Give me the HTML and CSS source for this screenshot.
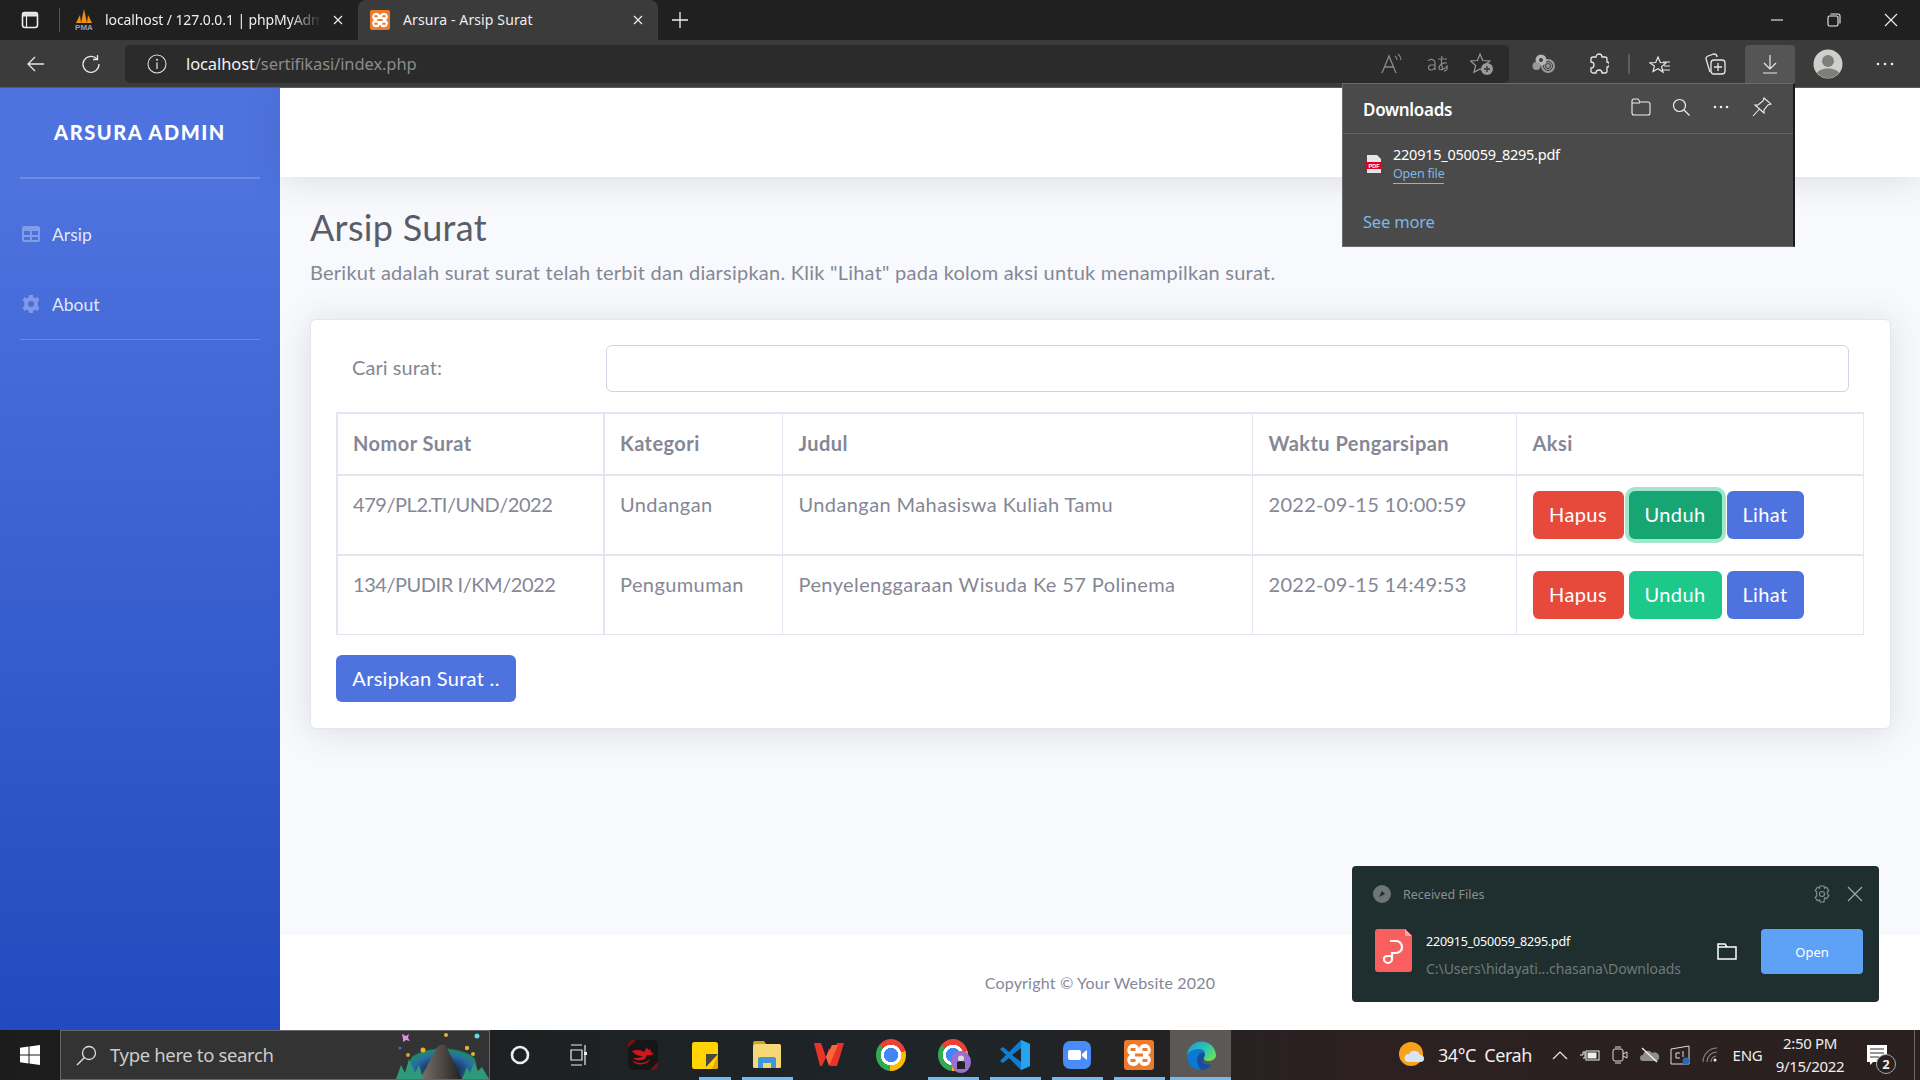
FILE: index.html
```html
<!DOCTYPE html>
<html lang="id">
<head>
<meta charset="utf-8">
<title>Arsura - Arsip Surat</title>
<link rel="stylesheet" href="styles.css">
</head>
<body>
<div class="tabbar">
  <div class="tab-toggle">
    <svg class="ic" width="18" height="18" viewBox="0 0 18 18"><rect x="1.5" y="1.5" width="15" height="15" rx="2.5" fill="none" stroke="#eee" stroke-width="1.6"/><path d="M2 2h14v3H2zM5.5 5v11" fill="#ddd" stroke="#eee" stroke-width="1.2"/></svg>
  </div>
  <div class="tab-sep"></div>
  <div class="tab">
    <svg class="fav" width="20" height="22" viewBox="0 0 20 22"><path d="M2 14 6 6l1 8zM7 14l3-14 3 14zM13 14l1-8 4 8z" fill="#f29111"/><text x="10" y="21" class="pma">PMA</text></svg>
    <span class="tab-title fade">localhost / 127.0.0.1 | phpMyAdmin</span>
    <svg class="tab-x" width="12" height="12" viewBox="0 0 12 12"><path d="M2 2l8 8M10 2l-8 8" stroke="#eee" stroke-width="1.2"/></svg>
  </div>
  <div class="tab active">
    <svg class="fav" width="20" height="20" viewBox="0 0 30 30"><rect width="30" height="30" rx="3" fill="#ee7a2c"/><path d="M9 4a6 6 0 0 1 6 4 6 6 0 0 1 6-4 6 6 0 0 1 3 11 6 6 0 0 1-3 11 6 6 0 0 1-6-4 6 6 0 0 1-6 4 6 6 0 0 1-3-11A6 6 0 0 1 9 4z" fill="#fff"/><path d="M6.500 8h5v3h-5zM18.500 8h5v3h-5zM6.500 19h5v3h-5zM18.500 19h5v3h-5zM11 13.500h8v3h-8z" fill="#ee7a2c"/></svg>
    <span class="tab-title">Arsura - Arsip Surat</span>
    <svg class="tab-x" width="12" height="12" viewBox="0 0 12 12"><path d="M2 2l8 8M10 2l-8 8" stroke="#eee" stroke-width="1.2"/></svg>
  </div>
  <svg class="plus" width="18" height="18" viewBox="0 0 18 18"><path d="M9 1v16M1 9h16" stroke="#eee" stroke-width="1.3"/></svg>
  <div class="win">
    <svg width="14" height="14" viewBox="0 0 14 14"><path d="M1 7h12" stroke="#eee" stroke-width="1.1"/></svg>
    <svg width="14" height="14" viewBox="0 0 14 14"><rect x="1" y="3" width="10" height="10" rx="1.5" fill="none" stroke="#eee" stroke-width="1.1"/><path d="M3.5 1h7.5a2 2 0 0 1 2 2v7.5" fill="none" stroke="#eee" stroke-width="1.1"/></svg>
    <svg width="14" height="14" viewBox="0 0 14 14"><path d="M1 1l12 12M13 1L1 13" stroke="#eee" stroke-width="1.1"/></svg>
  </div>
</div>

<div class="toolbar">
  <div class="tool-left">
    <svg width="20" height="20" viewBox="0 0 20 20"><path d="M18 10H2M9 3l-7 7 7 7" fill="none" stroke="#e8e8e8" stroke-width="1.3"/></svg>
  </div>
  <div class="tool-left">
    <svg width="20" height="20" viewBox="0 0 20 20"><path d="M16 5a8 8 0 1 0 2 5" fill="none" stroke="#e8e8e8" stroke-width="1.3"/><path d="M16.5 1v4.5H12" fill="none" stroke="#e8e8e8" stroke-width="1.3"/></svg>
  </div>
  <div class="address">
    <svg class="info" width="20" height="20" viewBox="0 0 20 20"><circle cx="10" cy="10" r="9" fill="none" stroke="#ddd" stroke-width="1.1"/><path d="M10 8.5V15" stroke="#ddd" stroke-width="1.3"/><circle cx="10" cy="5.8" r="1" fill="#ddd"/></svg>
    <span class="url"><span class="url-host">localhost</span>/sertifikasi/index.php</span>
    <div class="addr-tools">
      <span class="addr-tool"><svg width="24" height="22" viewBox="0 0 24 22"><path d="M2 20 9 3l7 17M4.5 14h9" fill="none" stroke="#8a8a8a" stroke-width="1.3"/><path d="M15 3a5 5 0 0 1 2 4M18 1a8 8 0 0 1 3 6" fill="none" stroke="#8a8a8a" stroke-width="1.1"/></svg></span>
      <span class="addr-tool"><svg width="24" height="20" viewBox="0 0 24 20"><path d="M3 7a4 4 0 0 1 7 1v8M10 11H6a2.500 2.500 0 0 0 0 5c2 0 4-2 4-3M13 5h9M17 2c-1 5-1 9 1 14M22 9c-4-1-8 2-8 5 0 3 5 2 8-2 1 3-1 5-3 5" fill="none" stroke="#8a8a8a" stroke-width="1.2"/></svg></span>
      <span class="addr-tool"><svg width="24" height="24" viewBox="0 0 24 24"><path d="M10 2l2.700 6.500 7 .5-5.400 4.500 1.700 6.800L10 17l-6 3.300 1.700-6.800L.5 9l7-.5z" fill="none" stroke="#999" stroke-width="1.2"/><circle cx="17" cy="17" r="6" fill="#9a9a9a"/><path d="M17 14v6M14 17h6" stroke="#333" stroke-width="1.300"/></svg></span>
    </div>
  </div>
  <div class="tools">
    <span class="tool"><svg width="24" height="22" viewBox="0 0 24 22"><circle cx="16" cy="13" r="7" fill="#9a9a9a"/><circle cx="16" cy="13" r="4.500" fill="none" stroke="#3b3b3b" stroke-width="1"/><circle cx="16" cy="13" r="2.500" fill="none" stroke="#3b3b3b" stroke-width="1"/><circle cx="9" cy="7" r="5.500" fill="#b5b5b5"/><circle cx="4.500" cy="13" r="4" fill="#999"/><circle cx="9" cy="7" r="2" fill="#3b3b3b"/></svg></span>
    <span class="tool"><svg width="20" height="22" viewBox="0 0 20 22"><path d="M7 4a3 3 0 0 1 6 0h3a2 2 0 0 1 2 2v3a2.500 2.500 0 0 1 0 5v4a2 2 0 0 1-2 2h-3a3 3 0 0 0-6 0H4a2 2 0 0 1-2-2v-3a3 3 0 0 0 0-6V6a2 2 0 0 1 2-2z" fill="none" stroke="#e8e8e8" stroke-width="1.300"/></svg></span>
    <span class="tool-sep"></span>
    <span class="tool"><svg width="22" height="22" viewBox="0 0 22 22"><path d="M9 2l2.300 5.500 5.700.4-4.400 3.700 1.400 5.500L9 13.700l-5 2.900 1.400-5.500L1 7.900l5.700-.4z" fill="none" stroke="#e8e8e8" stroke-width="1.200" transform="translate(0 2)"/><path d="M14 9h7M15 13h6M13 17h8" stroke="#e8e8e8" stroke-width="1.200"/></svg></span>
    <span class="tool"><svg width="22" height="24" viewBox="0 0 22 24"><path d="M6 20 2 7a3 3 0 0 1 2-3l6-2c2 0 3 1 3 3" fill="none" stroke="#e8e8e8" stroke-width="1.300"/><rect x="7" y="8" width="14" height="14" rx="3" fill="none" stroke="#e8e8e8" stroke-width="1.300"/><path d="M14 11v8M10 15h8" stroke="#e8e8e8" stroke-width="1.300"/></svg></span>
    <span class="tool current"><span class="tool-hl"><svg width="18" height="22" viewBox="0 0 18 22"><path d="M9 2v14M3 10l6 6 6-6M2 20h14" fill="none" stroke="#e8e8e8" stroke-width="1.200"/></svg></span></span>
    <span class="tool avatar"><svg width="30" height="30" viewBox="0 0 30 30"><circle cx="15" cy="15" r="14.500" fill="#cfcfcb"/><circle cx="15" cy="12" r="6" fill="#7e7e7a"/><path d="M4 24c3-6 19-6 22 0a14.500 14.500 0 0 1-22 0z" fill="#7e7e7a"/></svg></span>
    <span class="tool more"><svg width="18" height="4" viewBox="0 0 18 4"><circle cx="2" cy="2" r="1.300" fill="#eee"/><circle cx="9" cy="2" r="1.300" fill="#eee"/><circle cx="16" cy="2" r="1.300" fill="#eee"/></svg></span>
  </div>
</div>

<div class="page">
  <aside class="sidebar">
    <div class="brand">ARSURA ADMIN</div>
    <div class="side-rule"></div>
    <nav class="side-nav">
      <a class="side-link"><svg class="side-ic" width="18" height="16" viewBox="0 0 18 16"><path d="M2 0h14a2 2 0 0 1 2 2v12a2 2 0 0 1-2 2H2a2 2 0 0 1-2-2V2a2 2 0 0 1 2-2zm0 5v4h6V5zm8 0v4h6V5zm-8 6v3h6v-3zm8 0v3h6v-3z" fill-rule="evenodd"/></svg>Arsip</a>
      <a class="side-link"><svg class="side-ic" width="18" height="18" viewBox="0 0 18 18"><path d="M7 0h4l.5 2.500 1.800.8L15.500 2l2 3.300-1.800 1.800v3.800l1.800 1.800-2 3.300-2.200-1.300-1.800.8L11 18H7l-.5-2.500-1.800-.8L2.500 16l-2-3.300 1.800-1.800V7.100L.5 5.300l2-3.300 2.200 1.300 1.800-.8zM9 6a3 3 0 1 0 0 6 3 3 0 0 0 0-6z" fill-rule="evenodd"/></svg>About</a>
    </nav>
    <div class="side-rule thin"></div>
  </aside>

  <div class="content">
    <header class="topbar"></header>
    <main class="main">
      <h1 class="title">Arsip Surat</h1>
      <p class="lead">Berikut adalah surat surat telah terbit dan diarsipkan. Klik "Lihat" pada kolom aksi untuk menampilkan surat.</p>
      <section class="card">
        <div class="search-row">
          <label class="search-label" for="cari">Cari surat:</label>
          <input class="search-input" id="cari" type="text">
        </div>
        <table class="data">
          <colgroup><col class="c1"><col class="c2"><col class="c3"><col class="c4"><col class="c5"></colgroup>
          <thead>
            <tr><th>Nomor Surat</th><th>Kategori</th><th>Judul</th><th>Waktu Pengarsipan</th><th>Aksi</th></tr>
          </thead>
          <tbody>
            <tr class="r1">
              <td class="num">479/PL2.TI/UND/2022</td><td>Undangan</td><td>Undangan Mahasiswa Kuliah Tamu</td><td class="time">2022-09-15 10:00:59</td>
              <td class="acts"><div class="btns"><a class="btn hapus">Hapus</a><a class="btn unduh focus">Unduh</a><a class="btn lihat">Lihat</a></div></td>
            </tr>
            <tr class="r2">
              <td class="num">134/PUDIR I/KM/2022</td><td>Pengumuman</td><td>Penyelenggaraan Wisuda Ke 57 Polinema</td><td class="time">2022-09-15 14:49:53</td>
              <td class="acts"><div class="btns"><a class="btn hapus">Hapus</a><a class="btn unduh">Unduh</a><a class="btn lihat">Lihat</a></div></td>
            </tr>
          </tbody>
        </table>
        <a class="btn archive">Arsipkan Surat ..</a>
      </section>
    </main>
    <footer class="footer">Copyright © Your Website 2020</footer>
  </div>
</div>

<div class="taskbar">
  <div class="start"><svg width="20" height="20" viewBox="0 0 20 20"><path d="M0 2.800 8.500 1.600v7.900H0zM9.500 1.500 20 0v9.500H9.500zM0 10.500h8.500v7.900L0 17.200zM9.500 10.500H20V20L9.500 18.500z" fill="#fff"/></svg></div>
  <div class="searchbox">
    <svg class="s-ic" width="21" height="21" viewBox="0 0 21 21"><circle cx="13" cy="8" r="6.500" fill="none" stroke="#ddd" stroke-width="1.300"/><path d="M8.500 12.500 1 20" stroke="#ddd" stroke-width="1.400"/></svg>
    <span class="s-text">Type here to search</span>
    <svg class="s-art" width="93" height="49" viewBox="0 0 93 49"><defs><radialGradient id="halo" cx=".5" cy=".8" r=".6"><stop offset=".3" stop-color="#162a44"/><stop offset=".7" stop-color="#2a6aa8"/><stop offset=".92" stop-color="#1f8a6a"/><stop offset="1" stop-color="#333"/></radialGradient><linearGradient id="rock" x1="0" x2="1"><stop offset="0" stop-color="#7c7268"/><stop offset="1" stop-color="#222"/></linearGradient></defs><path d="M12 49C10 20 30 10 47 10s37 10 34 39z" fill="url(#halo)"/><path d="M24 49l18-33c3-2 6-2 8 0l16 33z" fill="url(#rock)"/><path d="M0 49l5-14 4 8 4-14 6 14 4-8 4 14zM66 49l5-12 3 6 4-10 4 8 4-4 7 12z" fill="#2f9a7a"/><path d="M6 4l4 2 3-2-1 4 2 3-4-1-3 2v-3z" fill="#e58be8"/><circle cx="50" cy="5" r="2" fill="#e0b23a"/><circle cx="81" cy="6" r="2.500" fill="#5fd8e8"/><circle cx="27" cy="20" r="2.500" fill="#f0b020"/><circle cx="71" cy="18" r="2.200" fill="#e0b23a"/><circle cx="12" cy="25" r="2" fill="#d0a828"/><circle cx="77" cy="24" r="2" fill="#e0b23a"/><circle cx="4" cy="18" r="1.500" fill="#3a6ac8"/></svg>
  </div>
  <span class="tb-sys"><svg width="20" height="20" viewBox="0 0 20 20"><circle cx="10" cy="10" r="8" fill="none" stroke="#eee" stroke-width="2.600"/></svg></span>
  <span class="tb-sys"><svg width="20" height="22" viewBox="0 0 20 22"><path d="M1 1h11M1 21h11M1 6h11v10H1z M15 1v20" fill="none" stroke="#eee" stroke-width="1.200"/><rect x="14" y="8" width="3" height="3" fill="#eee"/></svg></span>
  <span class="tb-app"><svg width="30" height="30" viewBox="0 0 30 30"><rect width="30" height="30" rx="5" fill="#161616"/><path d="M0 5a5 5 0 0 1 5-5h3L0 8zM30 25a5 5 0 0 1-5 5h-3l8-8z" fill="#7a1015"/><path d="M4 11c6-2 9-1 12 1l3-5 1 3 2-1 1 3 3 2-3 1-4 0-2 4c-4 2-9 2-12-1 4 0 8 0 10-2-5 0-9-2-11-5zM4 20c5 4 13 4 18-1-2 6-14 8-18 1z" fill="#d0161d"/></svg></span>
  <span class="tb-app open part"><svg width="26" height="27" viewBox="0 0 26 27"><rect width="26" height="27" rx="2.500" fill="#ffd400"/><path d="M26 12v13a2 2 0 0 1-2 2H20z" fill="#e6a800"/><path d="M14 12h12L14 25z" fill="#4a4742"/></svg></span>
  <span class="tb-app open"><svg width="28" height="28" viewBox="0 0 28 28"><path d="M0 2a2 2 0 0 1 2-2h9l2 3h-13z" fill="#d9a01c"/><rect y="3" width="28" height="24" rx="1.500" fill="#f8d775"/><path d="M5 27v-9a2 2 0 0 1 2-2h14a2 2 0 0 1 2 2v9h-5v-5h-8v5z" fill="#3f97d9"/></svg></span>
  <span class="tb-app"><svg width="30" height="28" viewBox="0 0 30 28"><path d="M0 2h7l5 14 3-9 3 9 5-14h7l-7 23h-7l-4-9-4 9H6z" fill="#e8332a"/><path d="M12 16 18 4h6l-9 21z" fill="#f7693a"/></svg></span>
  <span class="tb-app"><span class="chrome"></span></span>
  <span class="tb-app open"><span class="chrome"></span><span class="badge-dot"><svg width="12" height="14" viewBox="0 0 12 14"><circle cx="6" cy="3.500" r="3" fill="#ddd"/><path d="M2 14V8a4 2 0 0 1 8 0v6z" fill="#222"/></svg></span></span>
  <span class="tb-app open"><svg width="30" height="30" viewBox="0 0 30 30"><path d="M21 0l9 4v22l-9 4L9 18l-6 5-3-2 6-6-6-6 3-2 6 5z" fill="#0e7fd0"/><path d="M21 0l9 4v22l-9 4zM21 8l-9 7 9 7z" fill="#24a4ee"/><path d="M21 8v14l-9-7z" fill="#202528"/></svg></span>
  <span class="tb-app open"><svg width="28" height="28" viewBox="0 0 28 28"><rect width="28" height="28" rx="7" fill="#4a8cf7"/><rect x="5" y="9" width="13" height="10" rx="2" fill="#fff"/><path d="M19 13l5-4v10l-5-4z" fill="#fff"/></svg></span>
  <span class="tb-app open"><svg width="30" height="30" viewBox="0 0 30 30"><rect width="30" height="30" rx="3" fill="#ee7a2c"/><path d="M9 4a6 6 0 0 1 6 4 6 6 0 0 1 6-4 6 6 0 0 1 3 11 6 6 0 0 1-3 11 6 6 0 0 1-6-4 6 6 0 0 1-6 4 6 6 0 0 1-3-11A6 6 0 0 1 9 4z" fill="#fff"/><path d="M6.500 8h5v3h-5zM18.500 8h5v3h-5zM6.500 19h5v3h-5zM18.500 19h5v3h-5zM11 13.500h8v3h-8z" fill="#ee7a2c"/></svg></span>
  <span class="tb-app open now"><svg width="30" height="30" viewBox="0 0 30 30"><defs><linearGradient id="edgeA" x1="0" y1="0" x2="1" y2=".7"><stop offset="0" stop-color="#1f8fd8"/><stop offset=".6" stop-color="#2fc6b0"/><stop offset="1" stop-color="#6ade5a"/></linearGradient></defs><path d="M1 17a14.500 14.500 0 0 1 29-2c0 4-4 6-8 6-3 0-5-2-4-4 1-3 1-6-4-6-6 0-12 2-13 6z" fill="url(#edgeA)"/><path d="M1 16c1-5 7-7 12-7 6 0 7 4 5 8-3 7 3 9 8 7-3 4-7 6-11 6C7 30 1 24 1 16z" fill="#0c78cf"/><path d="M11 20c0-4 3-8 7-7 1 1 1 3 0 4-3 7 3 9 8 7-3 4-7 6-11 6 1 0-4-3-4-10z" fill="#174f9e"/></svg></span>
  <div class="tray">
    <svg class="weather" width="27" height="26" viewBox="0 0 27 26"><circle cx="12" cy="12" r="12" fill="#f6a21b"/><path d="M9 20a4 4 0 0 1 1-8 6 6 0 0 1 11 1 3.500 3.500 0 0 1 1 7z" fill="#d8e4f2"/></svg>
    <span class="w-text">34°C&nbsp; Cerah</span>
    <span class="tray-ic first"><svg width="16" height="9" viewBox="0 0 16 9"><path d="M1 8l7-7 7 7" fill="none" stroke="#eee" stroke-width="1.200"/></svg></span>
    <span class="tray-ic"><svg width="20" height="12" viewBox="0 0 20 12"><path d="M0 6h3V3h2v6H3" fill="none" stroke="#eee"/><rect x="6" y="2" width="13" height="9" fill="none" stroke="#eee"/><rect x="7.500" y="3.500" width="9" height="6" fill="#eee"/></svg></span>
    <span class="tray-ic"><svg width="16" height="18" viewBox="0 0 16 18"><rect x="1" y="3" width="10" height="12" rx="2" fill="none" stroke="#ddd"/><path d="M11 8l4-2v6l-4-2M3 1h6M3 17h6" fill="none" stroke="#ddd"/></svg></span>
    <span class="tray-ic"><svg width="20" height="16" viewBox="0 0 20 16"><path d="M3 14a3 3 0 0 1 0-6 5 5 0 0 1 9-2 4 4 0 0 1 5 8z" fill="#8e8e8e"/><path d="M2 1l15 14" stroke="#eee" stroke-width="1.400"/></svg></span>
    <span class="tray-ic"><svg width="20" height="20" viewBox="0 0 20 20"><path d="M1 4 19 1v18H1z" fill="none" stroke="#ddd"/><path d="M6 8h4M6 8v5h4M13 6v6" fill="none" stroke="#ddd"/><circle cx="16" cy="16" r="3.500" fill="#2b6ab4"/></svg></span>
    <span class="tray-ic"><svg width="16" height="16" viewBox="0 0 16 16"><path d="M1 15A14 14 0 0 1 15 1M5 15A10 10 0 0 1 15 5M9 15a6 6 0 0 1 5-6" fill="none" stroke="#888" stroke-width="1.100"/><circle cx="13" cy="13" r="1.500" fill="#eee"/></svg></span>
    <span class="lang">ENG</span>
    <div class="clock"><span>2:50 PM</span><span>9/15/2022</span></div>
    <span class="notif"><svg width="20" height="20" viewBox="0 0 20 20"><path d="M0 0h20v17H6l-3 3v-3H0z" fill="#fff"/><path d="M3 4h14M3 8h14M3 12h9" stroke="#333" stroke-width="1.200"/></svg><span class="notif-n">2</span></span>
  </div>
</div>

<div class="dl-panel">
  <div class="dl-head">
    <span class="dl-title">Downloads</span>
    <div class="dl-tools">
      <span class="dl-tool"><svg width="20" height="18" viewBox="0 0 20 18"><path d="M1 3a2 2 0 0 1 2-2h4l2 3h8a2 2 0 0 1 2 2v9a2 2 0 0 1-2 2H3a2 2 0 0 1-2-2zM1 5h8" fill="none" stroke="#eee" stroke-width="1.100"/></svg></span>
      <span class="dl-tool"><svg width="18" height="18" viewBox="0 0 18 18"><circle cx="7.500" cy="7.500" r="6" fill="none" stroke="#eee" stroke-width="1.200"/><path d="M12 12l5.500 5.500" stroke="#eee" stroke-width="1.200"/></svg></span>
      <span class="dl-tool"><svg width="16" height="4" viewBox="0 0 16 4"><circle cx="2" cy="2" r="1.300" fill="#eee"/><circle cx="8" cy="2" r="1.300" fill="#eee"/><circle cx="14" cy="2" r="1.300" fill="#eee"/></svg></span>
      <span class="dl-tool"><svg width="20" height="20" viewBox="0 0 20 20"><path d="M12 1l7 6-3 1-4 5 0 3-9-8 3 0 5-4zM7.500 12 1 19" fill="none" stroke="#eee" stroke-width="1.100"/></svg></span>
    </div>
  </div>
  <div class="dl-item">
    <svg class="dl-pdf" width="16" height="18" viewBox="0 0 16 18"><path d="M1 0h10l4 4v14H1z" fill="#e6e6e6"/><rect y="7" width="16" height="7" fill="#e3001b"/><text x="8" y="12.700" class="pdf-t">PDF</text></svg>
    <div class="dl-info">
      <div class="dl-name">220915_050059_8295.pdf</div>
      <a class="dl-open">Open file</a>
    </div>
  </div>
  <a class="dl-more">See more</a>
</div>

<div class="toast">
  <div class="toast-head">
    <svg class="t-logo" width="18" height="18" viewBox="0 0 18 18"><circle cx="9" cy="9" r="9" fill="#6d7575"/><path d="M6 12l3-6 3 3z" fill="#1f2e2f"/></svg>
    <span class="t-title">Received Files</span>
    <svg class="t-gear" width="18" height="18" viewBox="0 0 18 18"><path d="M7 1h4l.5 2.200 2-.9 2.300 3.100-1.500 1.700v1.800l1.500 1.700-2.300 3.100-2-.9L11 17H7l-.5-2.200-2 .9-2.300-3.100L3.700 11V7L2.200 5.400 4.500 2.300l2 .9z" fill="none" stroke="#8a9292" stroke-width="1.100"/><circle cx="9" cy="9" r="2.500" fill="none" stroke="#8a9292" stroke-width="1.100"/></svg>
    <svg class="t-x" width="16" height="16" viewBox="0 0 16 16"><path d="M1 1l14 14M15 1 1 15" stroke="#a0a8a8" stroke-width="1.200"/></svg>
  </div>
  <div class="toast-body">
    <svg class="t-file" width="37" height="43" viewBox="0 0 37 43"><path d="M3 0h27l7 7v33a3 3 0 0 1-3 3H3a3 3 0 0 1-3-3V3a3 3 0 0 1 3-3z" fill="#fa5f5f"/><path d="M30 0l7 7h-7z" fill="#fda5a5"/><path d="M15 12h6a6 6 0 0 1 0 12h-4v6a4 4 0 0 1-8 0c0-2 2-3 4-3h3" fill="none" stroke="#fff" stroke-width="2.200"/></svg>
    <div class="t-info">
      <div class="t-name">220915_050059_8295.pdf</div>
      <div class="t-path">C:\Users\hidayati...chasana\Downloads</div>
    </div>
    <svg class="t-folder" width="20" height="17" viewBox="0 0 20 17"><path d="M1 1h7l2 3h9v12H1zM1 4h9" fill="none" stroke="#fff" stroke-width="1.500"/></svg>
    <a class="t-open">Open</a>
  </div>
</div>
</body>
</html>
```
FILE: styles.css
```css
* { box-sizing: border-box; }
html, body { margin: 0; padding: 0; }
body {
  width: 1920px; height: 1080px; overflow: hidden; position: relative;
  display: flex; flex-direction: column;
  font-family: "Noto Sans", sans-serif;
}
svg { display: block; flex: none; }

/* tab strip */
.tabbar { height: 40px; flex: none; background: #202020; display: flex; align-items: stretch; color: #eee; }
.tab-toggle { width: 59px; display: flex; align-items: center; justify-content: center; }
.tab-sep { width: 1px; height: 24px; background: #555; margin: 8px 0 0; }
.tab { width: 298px; display: flex; align-items: center; padding: 0 14px; font-size: 14px; }
.tab.active { width: 300px; background: #3b3b3b; border-radius: 8px 8px 0 0; padding: 0 14px 0 12px; }
.tab .fav { margin-right: 11px; }
.tab.active .fav { margin-right: 13px; }
.tab-title { flex: 1; white-space: nowrap; overflow: hidden; letter-spacing: -.1px; padding-bottom: 2px; }
.tab.active .tab-title { letter-spacing: .12px; }
.fade { -webkit-mask-image: linear-gradient(90deg, #000 85%, transparent 100%); mask-image: linear-gradient(90deg, #000 85%, transparent 100%); }
.tab-x { margin-left: 10px; }
.pma { font: 700 8px "Liberation Sans", sans-serif; fill: #8fa0c0; text-anchor: middle; }
.plus { margin: 11px 0 0 13px; }
.win { margin-left: auto; display: flex; align-items: center; gap: 43px; padding-right: 22px; }

/* toolbar */
.toolbar { height: 48px; flex: none; background: #3b3b3b; border-bottom: 1px solid #5a5a5a; display: flex; align-items: center; padding-left: 8px; position: relative; }
.tool-left { width: 55px; display: flex; align-items: center; justify-content: center; }
.address { width: 1384px; height: 38px; margin-left: 7px; background: #2b2b2b; border-radius: 5px; display: flex; align-items: center; padding-left: 22px; }
.info { margin-right: 19px; }
.url { font-size: 16.5px; color: #8c8c8c; letter-spacing: -.1px; white-space: nowrap; padding-bottom: 1px; }
.url-host { color: #f2f2f2; }
.addr-tools { margin-left: auto; display: flex; padding-right: 5px; }
.addr-tool { width: 45px; display: flex; align-items: center; justify-content: center; }
.tools { display: flex; align-items: center; margin-left: 7px; height: 38px; }
.tool { width: 55px; height: 38px; display: flex; align-items: center; justify-content: center; }
.tool-sep { width: 2px; height: 20px; background: #5e5e5e; margin: 0 2px 0 2px; }
.tool-hl { width: 50px; height: 38px; background: #555; border-radius: 4px 4px 0 0; display: flex; align-items: center; justify-content: center; }
.avatar { margin: 0 0 0 3px; }
.more { margin-left: 2px; }

/* page */
.page { flex: 1; display: flex; min-height: 0; }
.sidebar { width: 280px; flex: none; background: linear-gradient(180deg, #4e73df 10%, #224abe 100%); color: #fff; font-family: Lato, sans-serif; }
.brand { height: 89px; padding-bottom: 2px; display: flex; align-items: center; justify-content: center; font-weight: 900; font-size: 20px; letter-spacing: 1.55px; }
.side-rule { height: 2px; margin: 0 20px; background: rgba(255,255,255,.18); }
.side-rule.thin { height: 1px; }
.side-nav { padding-top: 20px; }
.side-link { height: 70px; display: flex; align-items: center; padding-left: 22px; font-size: 17.5px; color: rgba(255,255,255,.85); }
.side-ic { fill: rgba(255,255,255,.3); margin-right: 12px; }

.content { flex: 1; display: flex; flex-direction: column; min-width: 0; background: #f8f9fc; font-family: Lato, sans-serif; }
.topbar { height: 89px; flex: none; background: #fff; box-shadow: 0 3px 35px rgba(58,59,69,.15); }
.main { flex: 1; padding: 29px 29px 0 30px; }
.title { margin: 0; font-size: 36px; line-height: 42px; font-weight: 400; color: #5a5c69; letter-spacing: .3px; }
.lead { margin: 9px 0 32px; font-size: 20px; line-height: 30px; color: #858796; letter-spacing: .24px; }
.card { background: #fff; border: 1px solid #e3e6f0; border-radius: 6px; height: 410px; padding: 25px 25px 0; box-shadow: 0 3px 35px rgba(58,59,69,.15); }
.search-row { display: flex; align-items: center; height: 47px; }
.search-label { width: 270px; padding: 0 0 3px 16px; font-size: 20px; color: #858796; letter-spacing: .05px; }
.search-input { width: 1243px; height: 47px; border: 1px solid #d1d3e2; border-radius: 6px; background: #fff; outline: 0; }
.data { margin-top: 20px; width: 1526px; table-layout: fixed; border-collapse: collapse; font-size: 20px; line-height: 30px; color: #858796; }
.c1 { width: 267px; } .c2 { width: 178px; } .c3 { width: 470px; } .c4 { width: 264px; } .c5 { width: 347px; }
.data th, .data td { border: 1px solid #e3e6f0; padding: 13px 15px 15px; text-align: left; vertical-align: top; white-space: nowrap; letter-spacing: .4px; }
.data th:nth-child(n+3), .data td:nth-child(n+3) { padding-left: 16px; }
.data th { font-weight: 700; height: 62px; padding-top: 14px; border-top-width: 2px; border-bottom-width: 2px; letter-spacing: .45px; }
.data th:first-child, .data td:first-child { border-left-width: 2px; border-right-width: 2px; }
.data .num { letter-spacing: -.45px; }
.data .time { letter-spacing: .3px; }
.data .acts { padding-top: 15px; padding-left: 15px; }
.r1 td { height: 80px; border-bottom-width: 2px; }
.r2 td { height: 79px; }
.btns { display: flex; gap: 5px; }
.btn { display: flex; align-items: center; justify-content: center; height: 48px; border-radius: 6px; color: #fff; font-size: 20px; letter-spacing: .4px; padding-bottom: 2px; }
.hapus { width: 91px; background: #e74a3b; }
.unduh { width: 93px; background: #1cc88a; }
.lihat { width: 77px; background: #4e73df; }
.focus { background: #17a673; box-shadow: 0 0 0 4px #a0e7cb; }
.archive { width: 180px; height: 47px; margin-top: 20px; background: #4e73df; letter-spacing: .3px; }
.footer { height: 95px; flex: none; background: #fff; display: flex; align-items: center; justify-content: center; font-size: 16px; color: #858796; letter-spacing: .2px; }

/* taskbar */
.taskbar { height: 50px; flex: none; display: flex; align-items: stretch; background: linear-gradient(90deg, #1c1c1c 0%, #1e2528 50%, #2c2020 70%, #2b2020 100%); color: #eee; }
.start { width: 60px; display: flex; align-items: center; justify-content: center; }
.searchbox { width: 430px; background: #333; border: 1px solid #666; display: flex; align-items: center; padding-left: 15px; position: relative; overflow: hidden; }
.s-text { margin-left: 13px; font-size: 18.5px; color: #ccc; letter-spacing: -.35px; padding-bottom: 1px; }
.s-art { margin-left: auto; align-self: flex-end; }
.tb-sys { width: 60px; display: flex; align-items: center; justify-content: center; }
.tb-app { width: 62px; display: flex; align-items: center; justify-content: center; position: relative; }
.tb-sys + .tb-app { margin-left: 2px; }
.tb-app.open::after { content: ""; position: absolute; left: 6px; right: 5px; bottom: 0; height: 3px; background: #76b9ed; }
.tb-app.now { width: 61px; background: #5c5856; }
.tb-app.now::after { left: 0; right: 0; }
.tb-app.part::after { left: 25px; right: 5px; }
.chrome { width: 30px; height: 32px; border-radius: 50%; background: radial-gradient(circle, #4285f4 0 32%, #fff 33% 46%, transparent 47%), conic-gradient(from -50deg, #ea4335 0 125deg, #fbbc05 125deg 235deg, #34a853 235deg 360deg); }
.badge-dot { position: absolute; left: 29px; top: 21px; width: 20px; height: 22px; border-radius: 50%; background: #9a6fcf; display: flex; align-items: center; justify-content: center; }
.tray { margin-left: auto; display: flex; align-items: center; width: 521px; padding-right: 5px; }
.tray::after { content: ""; align-self: stretch; width: 1px; background: #666; margin-left: auto; }
.w-text { margin-left: 12px; font-size: 18px; letter-spacing: -.45px; white-space: nowrap; width: 102px; }
.tray-ic { width: 30px; display: flex; align-items: center; justify-content: center; }
.tray-ic.first { margin-left: 5px; }
.lang { margin-left: 0; font-size: 15px; width: 45px; text-align: center; letter-spacing: -.3px; }
.clock { width: 76px; margin-left: 2px; display: flex; flex-direction: column; align-items: center; font-size: 15px; line-height: 23px; white-space: nowrap; letter-spacing: -.3px; }
.notif { margin-left: 19px; position: relative; }
.notif-n { position: absolute; left: 9px; top: 9px; width: 20px; height: 20px; border-radius: 50%; border: 1px solid #aaa; background: #2b2020; font-size: 13px; font-weight: 700; display: flex; align-items: center; justify-content: center; }

/* downloads flyout */
.dl-panel { position: absolute; left: 1342px; top: 83px; width: 453px; height: 164px; background: #4a4a4a; border: 1px solid #6a6a6a; border-right: 2px solid #1a1a1a; color: #fff; }
.dl-head { height: 50px; border-bottom: 1px solid #656565; display: flex; align-items: center; padding: 0 11px 0 20px; }
.dl-title { font-size: 17px; font-weight: 600; letter-spacing: -.3px; padding-top: 2px; }
.dl-tools { margin-left: auto; display: flex; align-items: center; margin-top: -4px; }
.dl-tool { width: 40.4px; display: flex; align-items: center; justify-content: center; }
.dl-item { display: flex; padding: 10px 0 0 23px; }
.dl-pdf { margin-top: 11px; margin-right: 11px; }
.pdf-t { font: 700 5.500px "Liberation Sans", sans-serif; fill: #fff; text-anchor: middle; }
.dl-name { font-size: 14.5px; line-height: 21px; letter-spacing: -.25px; }
.dl-open { display: inline-block; font-size: 12.5px; line-height: 17px; padding-bottom: 1px; color: #7ab8e8; border-bottom: 1px solid #7ab8e8; letter-spacing: -.2px; vertical-align: top; }
.dl-more { display: block; margin: 24px 0 0 20px; font-size: 16.5px; line-height: 22px; color: #7ab8e8; letter-spacing: -.2px; }

/* received files toast */
.toast { position: absolute; left: 1352px; top: 866px; width: 527px; height: 136px; background: #1f2e2f; border-radius: 4px; color: #fff; }
.toast-head { display: flex; align-items: center; height: 56px; padding: 0 16px 0 21px; }
.t-title { margin-left: 12px; font-size: 12.5px; color: #8a9090; }
.t-gear { margin-left: auto; }
.t-x { margin-left: 16px; }
.toast-body { display: flex; align-items: flex-start; padding: 7px 16px 0 23px; }
.t-file { margin-right: 14px; }
.t-info { width: 291px; }
.t-name { font-size: 12.5px; line-height: 18px; margin-top: 4px; letter-spacing: -.2px; }
.t-path { font-size: 14px; line-height: 20px; margin-top: 8px; color: #6f7a7a; letter-spacing: -.05px; white-space: nowrap; }
.t-folder { margin-top: 14px; }
.t-open { margin-left: 24px; width: 102px; height: 45px; background: #5ea2f8; border-radius: 4px; display: flex; align-items: center; justify-content: center; font-size: 13px; }
```
